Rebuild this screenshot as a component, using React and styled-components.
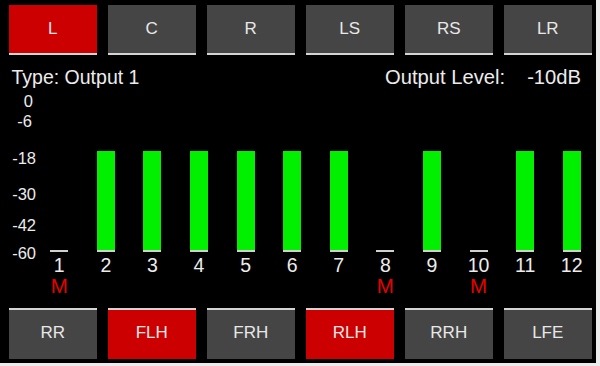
import styled, { createGlobalStyle } from "styled-components";

const GlobalStyle = createGlobalStyle`
  html, body {
    margin: 0;
    padding: 0;
    background: #ececec;
  }
  body {
    font-family: "Liberation Sans", Arial, sans-serif;
  }
`;

const topTabs = ["L", "C", "R", "LS", "RS", "LR"];
const bottomTabs = ["RR", "FLH", "FRH", "RLH", "RRH", "LFE"];

const scale = [
  { label: "0", top: 4, right: 3 },
  { label: "-6", top: 24, right: 4 },
  { label: "-18", top: 61, right: 0 },
  { label: "-30", top: 97, right: 0 },
  { label: "-42", top: 128, right: 0 },
  { label: "-60", top: 156, right: 0 },
];

const channels = [
  { n: 1, db: -60, muted: true },
  { n: 2, db: -18 },
  { n: 3, db: -18 },
  { n: 4, db: -18 },
  { n: 5, db: -18 },
  { n: 6, db: -18 },
  { n: 7, db: -18 },
  { n: 8, db: -60, muted: true },
  { n: 9, db: -18 },
  { n: 10, db: -60, muted: true },
  { n: 11, db: -18 },
  { n: 12, db: -18 },
];

export default function App() {
  return (
    <>
      <GlobalStyle />
      <Panel>
        <TabRow $pos="top">
          {topTabs.map((t, i) => (
            <Tab key={t} $active={i === 0} $edge="bottom">
              {t}
            </Tab>
          ))}
        </TabRow>

        <InfoRow>
          <span>Type: Output 1</span>
          <Level>
            <span>Output Level:</span>
            <span>-10dB</span>
          </Level>
        </InfoRow>

        <Meters>
          <Scale>
            {scale.map((s) => (
              <Tick key={s.label} style={{ top: s.top, right: s.right }}>
                {s.label}
              </Tick>
            ))}
          </Scale>
          <Channels>
            {channels.map((c) => (
              <Channel key={c.n}>
                <Track>
                  <Bar style={{ height: (c.db + 60) * 2.36 }} />
                </Track>
                <Base />
                <Num>{c.n}</Num>
                <Mute>{c.muted ? "M" : ""}</Mute>
              </Channel>
            ))}
          </Channels>
        </Meters>

        <TabRow $pos="bottom">
          {bottomTabs.map((t) => (
            <Tab key={t} $active={t === "FLH" || t === "RLH"} $edge="top">
              {t}
            </Tab>
          ))}
        </TabRow>
      </Panel>
    </>
  );
}

const Panel = styled.div`
  width: 596px;
  height: 363px;
  background: #000;
  display: flex;
  flex-direction: column;
  color: #ececec;
  overflow: hidden;
`;

const TabRow = styled.div`
  display: grid;
  grid-template-columns: repeat(6, 1fr);
  column-gap: 11.5px;
  padding: ${(p) => (p.$pos === "top" ? "5px 4.5px 0 9px" : "12px 4.5px 4px 9px")};
`;

const Tab = styled.div`
  box-sizing: border-box;
  height: ${(p) => (p.$edge === "bottom" ? "50px" : "51px")};
  display: flex;
  align-items: center;
  justify-content: center;
  background: ${(p) => (p.$active ? "#cc0000" : "#454545")};
  ${(p) => (p.$edge === "bottom" ? "border-bottom" : "border-top")}: 2.5px solid #d4d4d4;
  padding-bottom: ${(p) => (p.$edge === "top" ? "4px" : "0")};
  font-size: 17px;
  color: #e8e8e8;
`;

const InfoRow = styled.div`
  display: flex;
  justify-content: space-between;
  align-items: baseline;
  margin-top: 10px;
  padding: 0 15px 0 11.5px;
  height: 24px;
  line-height: 24px;
  font-size: 19.5px;
`;

const Level = styled.div`
  display: flex;
  gap: 22px;
  font-size: 20.2px;
`;

const Meters = styled.div`
  display: flex;
`;

const Scale = styled.div`
  position: relative;
  width: 36px;
  flex: none;
`;

const Tick = styled.span`
  position: absolute;
  font-size: 16.5px;
  line-height: 17px;
  white-space: nowrap;
`;

const Channels = styled.div`
  display: grid;
  grid-template-columns: repeat(12, 1fr);
  width: 559px;
`;

const Channel = styled.div`
  display: flex;
  flex-direction: column;
  align-items: center;
`;

const Track = styled.div`
  height: 161px;
  width: 18px;
  display: flex;
  align-items: flex-end;
`;

const Bar = styled.div`
  width: 100%;
  background: #00f000;
`;

const Base = styled.div`
  width: 18px;
  height: 2px;
  background: #d0d0d0;
`;

const Num = styled.div`
  margin-top: 3px;
  font-size: 19.5px;
  line-height: 20px;
  height: 20px;
`;

const Mute = styled.div`
  font-size: 20.5px;
  line-height: 21px;
  height: 21px;
  color: #e80000;
`;
